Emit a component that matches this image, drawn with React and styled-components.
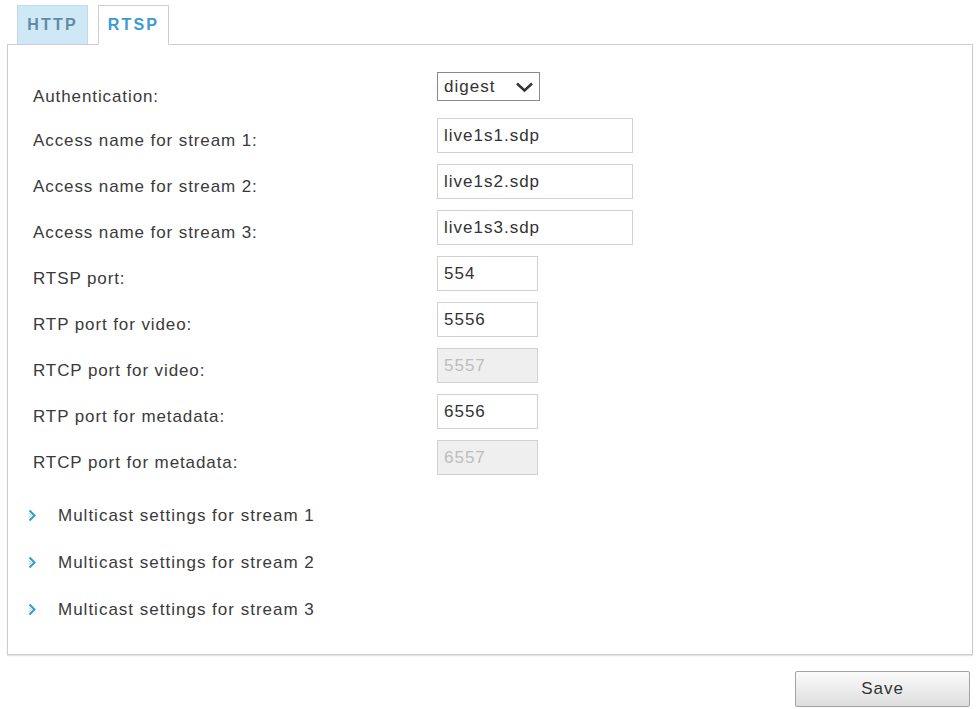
import React from 'react';
import styled, {createGlobalStyle} from 'styled-components';

const GlobalStyle = createGlobalStyle`
    body {
        margin: 0;
        background: #ffffff;
        font-family: "Liberation Sans", Arial, sans-serif;
        color: #333333;
    }
`

const PAGE = styled.div`
    width: 966px;
    padding: 5px 3px 0 7px;
`

const TABS = styled.div`
    display: flex;
    gap: 10px;
    padding-left: 10px;
    margin-bottom: -1px;
    position: relative;
`

const TAB = styled.div`
    width: 71px;
    height: 40px;
    box-sizing: border-box;
    display: flex;
    align-items: center;
    justify-content: center;
    font-size: 16px;
    font-weight: 700;
    letter-spacing: 2.2px;
    border: 1px solid ${p => p.active ? '#cfcfcf' : '#c4dbe7'};
    border-bottom-color: ${p => p.active ? '#ffffff' : '#cfcfcf'};
    background: ${p => p.active ? '#ffffff' : '#cfe8f6'};
    color: ${p => p.active ? '#3a9bd2' : '#5f8ca4'};
`

const PANEL = styled.div`
    border: 1px solid #cdcdcd;
    box-shadow: 0 1px 1px #e4e4e4;
    padding: 27px 25px 21px 25px;
`

const ROW = styled.div`
    display: grid;
    grid-template-columns: 404px 1fr;
    align-items: start;
    height: 46px;
`

const LABEL = styled.div`
    padding-top: ${p => p.first ? '15px' : '13px'};
    font-size: 17px;
    line-height: 20px;
    letter-spacing: 0.9px;
    color: #3a3a3a;
`

const INPUT = styled.input`
    box-sizing: border-box;
    width: ${p => p.wide ? '196px' : '101px'};
    height: 35px;
    padding: 0 6px;
    border: 1px solid #d2d2d2;
    background: ${p => p.disabled ? '#efefef' : '#ffffff'};
    font-family: "Liberation Sans", Arial, sans-serif;
    font-size: 17px;
    letter-spacing: 1px;
    color: ${p => p.disabled ? '#bdbdbd' : '#333333'};
    outline: none;
    &:disabled {
        color: #bdbdbd;
        -webkit-text-fill-color: #bdbdbd;
        opacity: 1;
    }
`

const SELECT = styled.div`
    box-sizing: border-box;
    width: 103px;
    height: 29px;
    display: flex;
    align-items: center;
    justify-content: space-between;
    padding: 0 5px 0 6px;
    border: 1px solid #8a8a8a;
    font-size: 17px;
    letter-spacing: 1px;
    color: #333333;
`

const MULTILIST = styled.div`
    margin-top: 6px;
`

const MULTIITEM = styled.div`
    display: flex;
    align-items: center;
    height: 47px;
    margin-left: -5px;
    gap: 21px;
    font-size: 17px;
    letter-spacing: 1px;
    color: #3a3a3a;
`

const FOOTER = styled.div`
    display: flex;
    justify-content: flex-end;
    padding: 16px 3px 0 0;
`

const BUTTON = styled.button`
    width: 175px;
    height: 36px;
    border: 1px solid #a3a3a3;
    border-radius: 2px;
    background: linear-gradient(#fbfbfb, #dedede);
    font-family: "Liberation Sans", Arial, sans-serif;
    font-size: 17px;
    letter-spacing: 1px;
    color: #333333;
`

const Chevron = () => (
    <svg width="19" height="12" viewBox="0 0 19 12">
        <path d="M2 2.5 L9.5 9.5 L17 2.5" fill="none" stroke="#333" strokeWidth="2.4"/>
    </svg>
);

const Arrow = () => (
    <svg width="9" height="13" viewBox="0 0 9 13">
        <path d="M1.5 1.5 L6.5 6.5 L1.5 11.5" fill="none" stroke="#2f9bd1" strokeWidth="2"/>
        <path d="M1 4.5 L3 6.5 L1 8.5" fill="none" stroke="#8cc8e6" strokeWidth="1"/>
    </svg>
);

const fields = [
    {label: 'Access name for stream 1:', value: 'live1s1.sdp', wide: true},
    {label: 'Access name for stream 2:', value: 'live1s2.sdp', wide: true},
    {label: 'Access name for stream 3:', value: 'live1s3.sdp', wide: true},
    {label: 'RTSP port:', value: '554'},
    {label: 'RTP port for video:', value: '5556'},
    {label: 'RTCP port for video:', value: '5557', disabled: true},
    {label: 'RTP port for metadata:', value: '6556'},
    {label: 'RTCP port for metadata:', value: '6557', disabled: true},
];

const App = () => {
    return (
        <PAGE>
            <GlobalStyle/>
            <TABS>
                <TAB>HTTP</TAB>
                <TAB active>RTSP</TAB>
            </TABS>
            <PANEL>
                <ROW>
                    <LABEL first>Authentication:</LABEL>
                    <SELECT>digest <Chevron/></SELECT>
                </ROW>
                {fields.map(f => (
                    <ROW key={f.label}>
                        <LABEL>{f.label}</LABEL>
                        <INPUT wide={f.wide} disabled={f.disabled} defaultValue={f.value}/>
                    </ROW>
                ))}
                <MULTILIST>
                    {[1, 2, 3].map(n => (
                        <MULTIITEM key={n}>
                            <Arrow/>
                            Multicast settings for stream {n}
                        </MULTIITEM>
                    ))}
                </MULTILIST>
            </PANEL>
            <FOOTER>
                <BUTTON>Save</BUTTON>
            </FOOTER>
        </PAGE>
    );
};

export default App;
